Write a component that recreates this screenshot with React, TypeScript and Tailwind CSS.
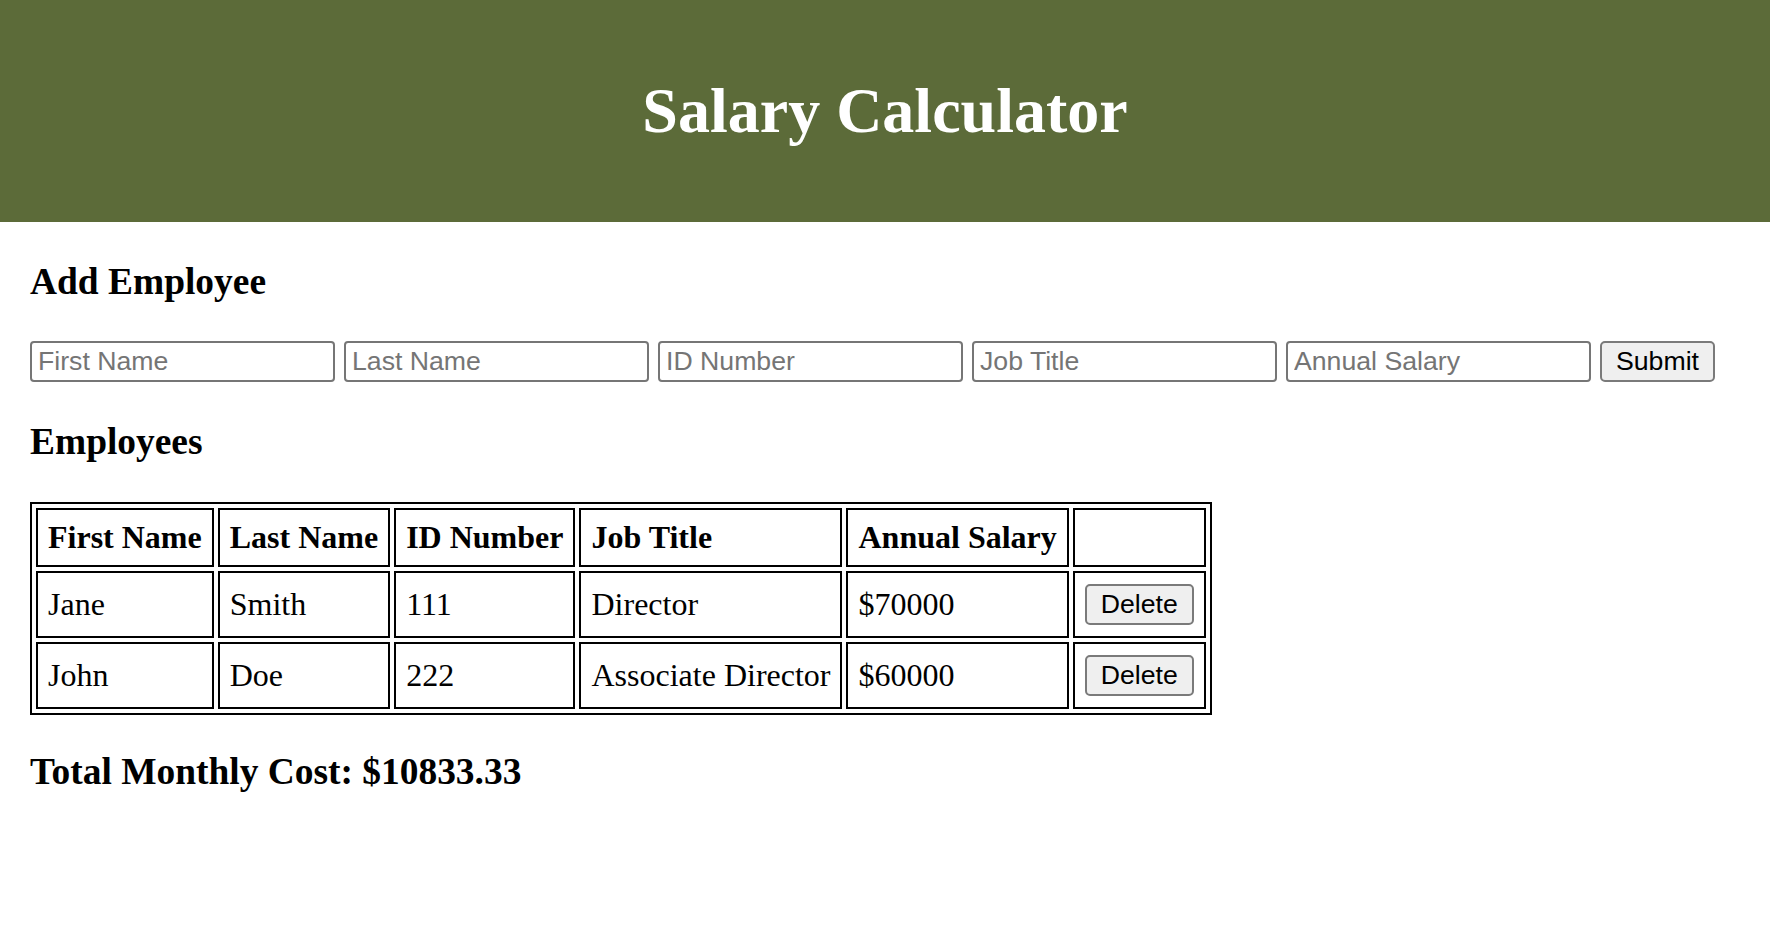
import React from "react";

const serif = { fontFamily: '"Liberation Serif", "Times New Roman", serif' };

const rows = [
  { first: "Jane", last: "Smith", id: "111", title: "Director", salary: "$70000" },
  { first: "John", last: "Doe", id: "222", title: "Associate Director", salary: "$60000" },
];

const placeholders = ["First Name", "Last Name", "ID Number", "Job Title", "Annual Salary"];

export default function App() {
  return (
    <div className="min-h-[934px] bg-white text-black font-['Liberation_Serif','Times_New_Roman',serif]">
      <header className="h-[222px] bg-[#5c6b39] flex items-center justify-center">
        <h1 className="text-[64px] font-bold text-white leading-[73.5px] font-['Liberation_Serif',serif]">
          Salary Calculator
        </h1>
      </header>
      <main className="px-[30px]">
        <h3 className="mt-[38px] mb-[38px] text-[37.44px] font-bold leading-[43px]">Add Employee</h3>
        <form
          className="flex items-center gap-[9px] h-[41px]"
          onSubmit={(e) => e.preventDefault()}
        >
          {placeholders.map((p) => (
            <input
              key={p}
              placeholder={p}
              className="w-[305px] h-[41px] border-2 border-[#767676] rounded-[4px] px-[6px] text-[26.67px] font-['Liberation_Sans',Arial,sans-serif] placeholder:text-[#757575] text-black bg-white outline-none"
            />
          ))}
          <button
            type="submit"
            className="w-[115px] h-[41px] border-2 border-[#7a7a7a] rounded-[5px] bg-[#efefef] text-[26.67px] text-black font-['Liberation_Sans',Arial,sans-serif] leading-none"
          >
            Submit
          </button>
        </form>
        <h3 className="mt-[38px] mb-[39px] text-[37.44px] font-bold leading-[43px]">Employees</h3>
        <table
          style={serif}
          className="border-separate border-spacing-[4px] border-2 border-black text-[32px] leading-[35px]"
        >
          <thead>
            <tr>
              {["First Name", "Last Name", "ID Number", "Job Title", "Annual Salary", ""].map((h, i) => (
                <th key={i} className="border-2 border-black p-[10px] text-left font-bold align-middle">
                  {h}
                </th>
              ))}
            </tr>
          </thead>
          <tbody>
            {rows.map((r) => (
              <tr key={r.id}>
                <td className="border-2 border-black p-[10px] align-middle">{r.first}</td>
                <td className="border-2 border-black p-[10px] align-middle">{r.last}</td>
                <td className="border-2 border-black p-[10px] align-middle">{r.id}</td>
                <td className="border-2 border-black p-[10px] align-middle">{r.title}</td>
                <td className="border-2 border-black p-[10px] align-middle">{r.salary}</td>
                <td className="border-2 border-black p-[10px] align-middle">
                  <button className="block my-[1px] w-[109px] h-[41px] border-2 border-[#7a7a7a] rounded-[5px] bg-[#efefef] text-[26.67px] text-black font-['Liberation_Sans',Arial,sans-serif] leading-none">
                    Delete
                  </button>
                </td>
              </tr>
            ))}
          </tbody>
        </table>
        <h3 className="mt-[35px] mb-[38px] text-[37.44px] font-bold leading-[43px]">
          Total Monthly Cost: $10833.33
        </h3>
      </main>
    </div>
  );
}
